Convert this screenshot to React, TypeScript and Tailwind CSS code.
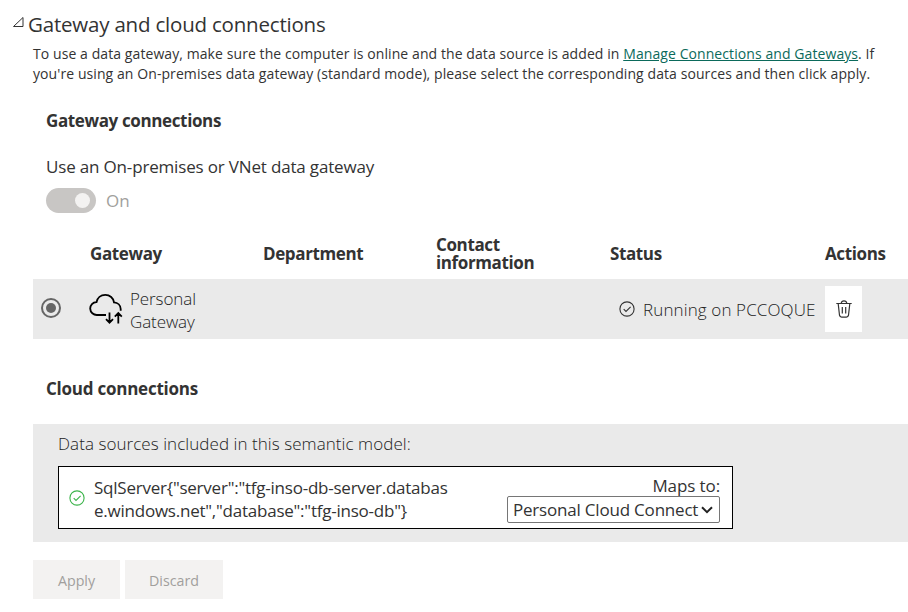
import React from "react";

function CheckCircle({ className }: { className: string }) {
  return (
    <svg viewBox="0 0 16 16" className={className} fill="none" stroke="currentColor" strokeWidth="1.1">
      <circle cx="8" cy="8" r="7.1" />
      <path d="M4.7 8.1l2.3 2.3 4.6-4.5" />
    </svg>
  );
}

function CloudSync() {
  return (
    <svg viewBox="0 0 34 32" className="h-8 w-[34px] shrink-0" fill="none" stroke="#000" strokeWidth="1.8">
      <path d="M17 22H8.200A6.600 6.600 0 0 1 1.200 15.600c0-3.500 2.600-6.300 6.300-6.400C8.200 4.800 11.800 1.800 16.300 1.800c4.500 0 8.200 3.200 8.700 7.600 3.800.2 6.500 2.900 6.700 6.600v1.800" />
      <path d="M20.500 19.500v10M17 26.200l3.500 3.500 3.500-3.500M29.300 30.500V20M25.800 23.600l3.500-3.500 3.500 3.500" />
    </svg>
  );
}

function Trash() {
  return (
    <svg viewBox="0 0 16 18" className="h-[18px] w-4" fill="none" stroke="#333" strokeWidth="1.2">
      <path d="M0.300 3.500h15.400M5.200 3.300C5.400 1.700 6.500.8 8 .8s2.600.9 2.800 2.500M2.200 3.700l1.300 11.500c.2 1.200.9 1.900 2.100 1.900h4.800c1.200 0 1.900-.7 2.100-1.900l1.300-11.500M6.300 7v6.500M9.700 7v6.500" />
    </svg>
  );
}

export default function App() {
  return (
    <main className="h-[612px] w-[908px] overflow-hidden bg-white pt-3 font-['Open_Sans',sans-serif] text-[17px] text-[#333] whitespace-nowrap">
      <header className="flex h-6 items-center pl-3">
        <svg viewBox="0 0 13 12" className="mr-[3px] -mt-1 h-3 w-[13px]" fill="none" stroke="#333">
          <path d="M1.500 10.500h9.500v-9z" />
        </svg>
        <h1 className="text-[20.500px] leading-6 tracking-[-0.2px]">Gateway and cloud connections</h1>
      </header>

      <p className="mt-2 pl-[33px] text-[14px] leading-5 tracking-[0.082px]">
        <span className="block">
          To use a data gateway, make sure the computer is online and the data source is added in{" "}
          <a className="text-[#0b6a5b] underline">Manage Connections and Gateways</a>. If
        </span>
        <span className="block">
          you're using an On-premises data gateway (standard mode), please select the corresponding data sources and then click apply.
        </span>
      </p>

      <section className="pl-[46px]">
        <h2 className="mt-[25px] leading-6 font-bold tracking-[-0.37px]">Gateway connections</h2>
        <p className="mt-[22px] leading-6 tracking-[-0.17px]">Use an On-premises or VNet data gateway</p>
        <div className="mt-[9px] flex h-[25px] items-center">
          <div className="flex h-[25px] w-[50px] items-center justify-end rounded-full bg-[#c8c6c4] pr-[6px]">
            <div className="size-[15px] rounded-full bg-[#f3f2f1]" />
          </div>
          <span className="ml-[10px] pt-px text-[#a19f9d]">On</span>
        </div>
      </section>

      <section className="mt-[15px] ml-[33px]">
        <div className="flex h-[51px] items-center leading-[18px] font-bold tracking-[-0.38px]">
          <div className="w-[174px] pl-[57px]">Gateway</div>
          <div className="ml-[56px] w-[173px]">Department</div>
          <div className="w-[174px]">Contact<br />information</div>
          <div className="w-[215px]">Status</div>
          <div>Actions</div>
        </div>
        <div className="flex h-[60px] items-center bg-[#eaeaea] pl-2">
          <div className="mb-[2px] flex size-5 items-center justify-center rounded-full border-2 border-[#666]">
            <div className="size-[10px] rounded-full bg-[#666]" />
          </div>
          <div className="ml-7 flex w-[530px] items-center">
            <CloudSync />
            <span className="ml-[7px] pt-0.5 leading-[23px] font-light tracking-[-0.1px] text-[#222]">Personal<br />Gateway</span>
          </div>
          <CheckCircle className="size-4" />
          <span className="ml-2 w-[182px] pt-px font-light tracking-[0.12px] text-[#222]">Running on PCCOQUE</span>
          <div className="flex h-[46px] w-[37px] items-center justify-center bg-white">
            <Trash />
          </div>
        </div>
      </section>

      <h2 className="mt-[38px] pl-[46px] leading-6 font-bold tracking-[-0.24px]">Cloud connections</h2>

      <section className="mt-[23px] ml-[33px] h-[118px] bg-[#eaeaea] pt-2 pl-[25px]">
        <p className="leading-6 font-light tracking-[0.06px] text-[#222]">Data sources included in this semantic model:</p>
        <div className="mt-[10px] flex h-[63px] w-[675px] border border-black bg-white">
          <div className="flex w-[35px] items-center pl-[10px]">
            <CheckCircle className="size-4 text-[#3bb44a]" />
          </div>
          <p className="w-[413px] pt-[9px] leading-[23px] tracking-[-0.23px]">
            {'SqlServer{"server":"tfg-inso-db-server.databas'}
            <br />
            {'e.windows.net","database":"tfg-inso-db"}'}
          </p>
          <div className="flex w-[213px] flex-col items-end pt-[7px]">
            <span className="pt-px leading-[21px] tracking-[-0.1px]">Maps to:</span>
            <div className="flex h-[27px] w-[213px] items-center rounded-[2px] border border-[#767676] pl-[5px]">
              <span className="w-[188px] pt-px tracking-[-0.2px]">Personal Cloud Connect</span>
              <svg viewBox="0 0 12 8" className="h-2 w-3" fill="none" stroke="#222" strokeWidth="2">
                <path d="M1 1.200l5 5 5-5" />
              </svg>
            </div>
          </div>
        </div>
      </section>

      <footer className="mt-[18px] flex gap-[5px] pl-[33px] text-[14.25px] text-[#a19f9d]">
        <button className="h-[39px] w-[87px] bg-[#f3f2f1] pt-0.5">Apply</button>
        <button className="h-[39px] w-[98px] bg-[#f3f2f1] pt-0.5">Discard</button>
      </footer>
    </main>
  );
}
